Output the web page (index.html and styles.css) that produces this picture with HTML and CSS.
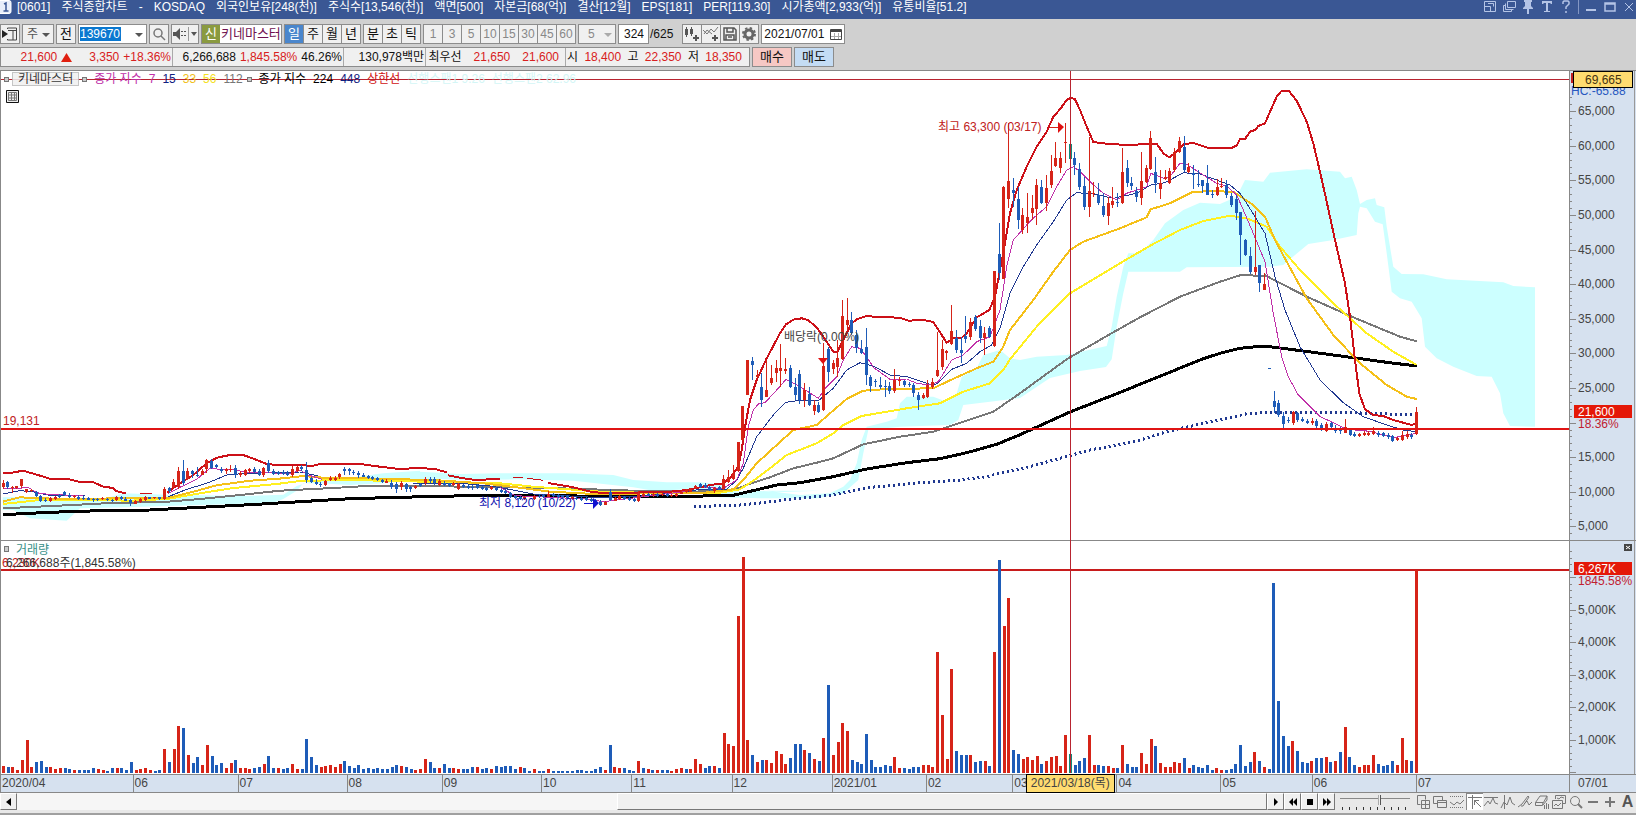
FILE: index.html
```html
<!DOCTYPE html>
<html lang="ko">
<head>
<meta charset="utf-8">
<title>[0601] 주식종합차트</title>
<link rel="stylesheet" href="styles.css">
</head>
<body>
<header class="titlebar">
  <svg class="app-mark" viewBox="0 0 14 14"><rect x="-2" y="0.5" width="13" height="13" rx="2" fill="#e8eefa" stroke="#fff"/><path d="M4 4l2-1v8M3.500 11h5" fill="none" stroke="#3a5794" stroke-width="1.500"/></svg>
  <h1 class="title"><span>[0601]</span><span>주식종합차트</span><span>-</span><span>KOSDAQ</span><span>외국인보유[248(천)]</span><span>주식수[13,546(천)]</span><span>액면[500]</span><span>자본금[68(억)]</span><span>결산[12월]</span><span>EPS[181]</span><span>PER[119.30]</span><span>시가총액[2,933(억)]</span><span>유통비율[51.2]</span></h1>
  <div class="window-tools">
    <button class="wbtn" aria-label="화면 배치"><svg viewBox="0 0 14 14"><path d="M1.500 1.500h11v10h-11zM1.500 6.500h6v5M5 3.500h5.500v3" /></svg></button>
    <button class="wbtn" aria-label="화면 복제"><svg viewBox="0 0 14 14"><path d="M5.500 1.500h8v6h-8zM3.500 5.500h-2v6h8v-2M3.500 3.500v6h8"/></svg></button>
    <button class="wbtn" aria-label="고정"><svg viewBox="0 0 14 14"><path class="solid" d="M3 0h8v2h-1v4l2 2v1H2V8l2-2V2H3zM6 9h2v5H6z"/></svg></button>
    <button class="wbtn" aria-label="글꼴"><svg viewBox="0 0 14 14"><path class="solid" d="M2 1h10v3h-1l-1-1H8v8h2v1H4v-1h2V3H4L3 4H2z"/></svg></button>
    <button class="wbtn" aria-label="도움말"><svg viewBox="0 0 14 14"><path d="M4 4V2l1-1h4l1 1v2L7 7v2M7 11v2" stroke-width="1.500"/></svg></button>
    <i class="wsep"></i>
    <button class="wbtn" aria-label="최소화"><svg viewBox="0 0 14 14"><path d="M2 10h10" stroke-width="2"/></svg></button>
    <button class="wbtn" aria-label="최대화"><svg viewBox="0 0 14 14"><path d="M2 3h10v8H2zM2 4h10" stroke-width="1.500"/></svg></button>
    <button class="wbtn" aria-label="닫기"><svg viewBox="0 0 14 14"><path d="M3 3l8 8M11 3l-8 8"/></svg></button>
  </div>
</header>

<section class="toolbar">
  <div class="row">
    <button class="btn w20" aria-label="패널"><svg width="16" height="16" viewBox="0 0 16 16" fill="none" stroke="#444"><path d="M5.500 3V2h9v12h-9v-1M6 4.500h9M11 5v9"/><path d="M0 4l6 4-6 4z" fill="#222" stroke="none"/></svg></button>
    <span class="combo w32"><select class="sel" aria-label="종목 구분"><option>주</option></select><svg class="arrow" viewBox="0 0 8 4"><path d="M0 0h8L4 4z"/></svg></span>
    <button class="btn w20">전</button>
    <span class="combo code"><input class="code-input" aria-label="종목코드" value="139670"><svg class="arrow" viewBox="0 0 8 4"><path d="M0 0h8L4 4z"/></svg></span>
    <button class="btn w20" aria-label="검색"><svg width="14" height="14" viewBox="0 0 14 14" fill="none" stroke="#777" stroke-width="1.500"><circle cx="6" cy="6" r="4"/><path d="M9 9l4 4"/></svg></button>
    <button class="btn w28" aria-label="소리"><svg width="24" height="14" viewBox="0 0 24 14"><path d="M0 5h3l4-4v12L3 9H0z" fill="#555"/><path d="M9 4v1M9 8v1M12 4v1M12 8v1" stroke="#555" stroke-width="2"/><path d="M15.500-4v22" stroke="#999"/><path d="M18 5h6l-3 4z" fill="#555"/></svg></button>
    <span class="name"><b class="badge">신</b><span class="stock">키네마스터</span></span>
    <div class="group"><button class="btn cell on">일</button><button class="btn cell">주</button><button class="btn cell">월</button><button class="btn cell">년</button></div>
    <div class="group"><button class="btn cell">분</button><button class="btn cell">초</button><button class="btn cell">틱</button></div>
    <div class="group off"><button class="btn cell">1</button><button class="btn cell">3</button><button class="btn cell">5</button><button class="btn cell">10</button><button class="btn cell">15</button><button class="btn cell">30</button><button class="btn cell">45</button><button class="btn cell">60</button></div>
    <span class="combo w38 off"><select class="sel center" aria-label="분 단위"><option>5</option></select><svg class="arrow" viewBox="0 0 8 4"><path d="M0 0h8L4 4z"/></svg></span>
    <span class="count"><input class="count-input" aria-label="조회 봉 수" value="324"><span>/625</span></span>
    <div class="group tools">
      <button class="btn cell" aria-label="봉 추가"><svg width="16" height="16" viewBox="0 0 16 16"><path d="M1 3h3v6H1zM6 3h3v5H6zM2 1h1v10H2zM7 1h1v9H7zM11 9h2v2h2v2h-2v2h-2v-2H9v-2h2z" fill="#555"/></svg></button>
      <button class="btn cell" aria-label="지표 추가"><svg width="16" height="16" viewBox="0 0 16 16"><path d="M0 4l4 4 4-5 3 3 4-5M1 8l3-4 5 4" fill="none" stroke="#777"/><path d="M11 9h2v2h2v2h-2v2h-2v-2H9v-2h2z" fill="#555"/></svg></button>
      <button class="btn cell" aria-label="저장"><svg width="16" height="16" viewBox="0 0 16 16" fill="none" stroke="#555" stroke-width="1.500"><path d="M2 2h10l2 2v10H2zM5 2v4h6V2M4 14V9h8v5M6 11h4"/></svg></button>
      <button class="btn cell" aria-label="설정"><svg width="16" height="16" viewBox="0 0 16 16" fill="none" stroke="#666"><circle cx="8" cy="8" r="4" stroke-width="3"/><circle cx="8" cy="8" r="6" stroke-width="2" stroke-dasharray="2.400 2.310"/></svg></button>
    </div>
    <span class="date"><input class="date-input" aria-label="기준일" value="2021/07/01"><svg width="12" height="12" viewBox="0 0 12 12"><path d="M.5 1.500h11v10H.5zM1 3h10" fill="none" stroke="#444"/><path d="M1 2h10v2H1z" fill="#444"/><path d="M1 8.500h10M4.500 5v6M8.500 5v6" stroke="#aaa"/></svg></span>
  </div>
  <div class="row quote-row">
    <div class="quotes">
      <div class="q q1"><span class="up">21,600</span><svg width="11" height="9" viewBox="0 0 11 9"><path d="M5.500 0L11 9H0z" fill="#e02010"/></svg><span class="up push">3,350</span><span class="up">+18.36%</span></div>
      <div class="q q2"><span>6,266,688</span><span class="up">1,845.58%</span><span>46.26%</span></div>
      <div class="q q3"><span>130,978백만</span></div>
      <div class="q q4"><span>최우선</span><span class="up">21,650</span><span class="up">21,600</span></div>
      <div class="q q5"><span>시</span><span class="up">18,400</span><span>고</span><span class="up">22,350</span><span>저</span><span class="up">18,350</span></div>
    </div>
    <button class="btn trade buy">매수</button>
    <button class="btn trade sell">매도</button>
  </div>
</section>

<main class="chart">
  <div class="plot">
    <svg id="plot" viewBox="1 71 1568 703" preserveAspectRatio="none"></svg>
    <div class="legend">
      <i class="sq"></i><span class="tag">키네마스터</span><i class="sq"></i>
      <span class="ma"><span class="c7">종가 지수</span><span class="c7">7</span><span class="c15">15</span><span class="c33">33</span><span class="c56">56</span><span class="c112">112</span></span>
      <i class="sq"></i>
      <span class="ma"><span class="c224">종가 지수</span><span class="c224">224</span><span class="c15">448</span><span class="cup">상한선</span><span class="cspan">선행스팬1 9.26</span><span class="cspan">선행스팬2 62.96</span></span>
    </div>
    <button class="grid-btn" aria-label="데이터 표"><svg width="13" height="13" viewBox="0 0 13 13"><path d="M.5.5h12v12H.5z" fill="#eee" stroke="#111"/><path d="M2.500 2.500h8v8h-8zM5.500 2v9M8.500 2v9M2 5h9M2 8h9" fill="none" stroke="#777"/></svg></button>
  </div>
  <svg class="axis" id="axis" viewBox="1569 71 67 703" preserveAspectRatio="none"></svg>
</main>

<div class="dates">
  <div class="months" id="months"></div>
  <div class="last-date">07/01</div>
  <div class="date-tip">2021/03/18(목)</div>
</div>

<footer class="bottom">
  <button class="sbtn" aria-label="왼쪽으로"><svg viewBox="0 0 10 10"><path d="M7 1v8L2 5z"/></svg></button>
  <div class="track"><div class="thumb"></div></div>
  <div class="player">
    <button class="sbtn" aria-label="재생"><svg viewBox="0 0 10 10"><path d="M3 1v8l4-4z"/></svg></button>
    <button class="sbtn" aria-label="뒤로"><svg viewBox="0 0 10 10"><path d="M5 1v8L1 5zM9 1v8L5 5z"/></svg></button>
    <button class="sbtn" aria-label="정지"><svg viewBox="0 0 10 10"><path d="M2 2h6v6H2z"/></svg></button>
    <button class="sbtn" aria-label="앞으로"><svg viewBox="0 0 10 10"><path d="M1 1v8l4-4zM5 1v8l4-4z"/></svg></button>
  </div>
  <div class="speed"><input type="range" class="slider" aria-label="속도" value="56"></div>
  <div class="draw">
    <button class="dbtn" aria-label="창 추가"><svg viewBox="0 0 16 16"><path d="M10.500 5.500v-4h-8v9h3M6.500 6.500h8v8h-8zM10.500 7v7M7 10.500h7"/></svg></button>
    <button class="dbtn" aria-label="창 겹치기"><svg viewBox="0 0 16 16"><path d="M5.500 9.500h-4v-7h9v4M5.500 6.500h9v7h-9zM6 8.500h8"/></svg></button>
    <button class="dbtn" aria-label="지표 영역"><svg viewBox="0 0 16 16"><path d="M1 2.500h14M1 13.500h14" stroke-dasharray="1 1"/><path d="M1 8l4 3 3-3 3 2 4-4"/></svg></button>
    <button class="dbtn pressed" aria-label="십자선"><svg viewBox="0 0 16 16"><path d="M1 3.500h14M5.500 1v14M7 6l7 7M7.500 11V6.500H12"/></svg></button>
    <button class="dbtn" aria-label="추세선"><svg viewBox="0 0 16 16"><path d="M1 3.500h14M1 12l4-5 2 3 3-6 2 5 3 1"/></svg></button>
    <button class="dbtn" aria-label="수직선"><svg viewBox="0 0 16 16"><path d="M4.500 1v14M1 14l3-6 3 3 3-8 2 6 3 2"/></svg></button>
    <button class="dbtn" aria-label="펜"><svg viewBox="0 0 16 16"><path d="M1 13l4-3L11 2l1 1-6 9-2 0M7 10l3-3 2 4 3-3"/></svg></button>
    <button class="dbtn" aria-label="지우개"><svg viewBox="0 0 16 16"><path d="M1.500 8.500L6 2h7L9.500 8.500zM1.500 8.500v3h7l.5-3M9 11l4-5V2M10.500 11v4M12.500 9v6M14.500 10v5"/></svg></button>
    <button class="dbtn" aria-label="이미지"><svg viewBox="0 0 16 16"><path d="M4.500 5V1.500h10v8H12M1.500 6.500h10v8h-10zM3 12l2-2 2 2 3-3M6 4l2 1 2-2 3 1"/></svg></button>
    <button class="dbtn" aria-label="돋보기"><svg viewBox="0 0 16 16"><circle cx="7" cy="7" r="4.500"/><path d="M10 10l4 4" stroke-width="2"/></svg></button>
    <button class="dbtn" aria-label="축소"><svg viewBox="0 0 16 16"><path d="M3 8h10" stroke-width="2"/></svg></button>
    <button class="dbtn" aria-label="확대"><svg viewBox="0 0 16 16"><path d="M3 8h10M8 3v10" stroke-width="2"/></svg></button>
    <button class="dbtn letter">A</button>
  </div>
</footer>
<script src="app.js"></script>
</body>
</html>
```
FILE: styles.css
```css
* { box-sizing: border-box; }
html, body { height: 100%; }
body {
  margin: 0;
  display: flex;
  flex-direction: column;
  background: #d0d0d0;
  color: #111;
  font-family: "Liberation Sans", "Noto Sans CJK KR", sans-serif;
  font-size: 12px;
  line-height: 16px;
  overflow: hidden;
  white-space: nowrap;
}
button, input, select { font: inherit; color: inherit; margin: 0; padding: 0; border-radius: 0; }
svg { display: block; }

/* title bar */
.titlebar { flex: none; height: 19px; background: #3a5794; color: #fff; display: flex; align-items: flex-start; overflow: hidden; }
.app-mark { width: 14px; height: 14px; flex: none; }
.title { margin: 0 0 0 3px; font-size: 12px; line-height: 14px; font-weight: 400; display: flex; gap: 11px; flex: 1; }
.window-tools { display: flex; align-items: center; gap: 5px; height: 14px; }
.wbtn { border: 0; background: none; width: 14px; height: 14px; }
.wbtn svg { width: 14px; height: 14px; fill: none; stroke: #b4c4e6; }
.wbtn .solid { fill: #b4c4e6; stroke: none; }
.wsep { width: 1px; height: 14px; background: #8497c4; }

/* toolbar */
.toolbar { flex: none; height: 52px; padding-top: 5px; display: flex; flex-direction: column; gap: 3px; border-bottom: 1px solid #888; }
.row { display: flex; height: 20px; gap: 2px; }
.btn, .combo, .name, .count-input, .date { border: 1px solid #8c8c8c; background: #f0f0f0; height: 20px; }
.btn { display: flex; align-items: center; justify-content: center; flex: none; font-size: 13px; }
.w20 { width: 20px; }
.w28 { width: 28px; }
.w32 { width: 32px; }
.w38 { width: 38px; }
.combo { display: flex; align-items: center; flex: none; position: relative; }
.sel { appearance: none; border: 0; background: none; width: 100%; padding-left: 4px; height: 18px; color: #555; }
.sel.center { padding-left: 9px; color: #888; }
.arrow { position: absolute; right: 3px; top: 8px; width: 8px; height: 4px; fill: #555; pointer-events: none; }
.code { width: 69px; background: #fff; }
.code-input { border: 0; width: 41px; height: 14px; margin-left: 1px; background: #0a78d0; color: #fff; }
.name { display: flex; width: 81px; background: #fff; color: #701050; }
.badge { width: 18px; background: #8a9a40; color: #fff; font-weight: 400; font-size: 13px; line-height: 17px; text-align: center; }
.stock { font-size: 13px; padding-left: 1px; line-height: 17px; }
.group { display: flex; }
.cell { width: 20px; margin-right: -1px; }
.group .cell:last-child { margin-right: 0; }
.on { background: #4a86cc; color: #fff; }
.off { color: #888; }
.off .cell { font-size: 12px; }
.off .arrow { fill: #aaa; }
.count { display: flex; align-items: center; gap: 1px; margin-right: 7px; }
.count-input { width: 31px; background: #fff; text-align: right; padding-right: 4px; }
.date { display: flex; align-items: center; width: 84px; background: #fff; gap: 2px; padding-left: 2px; }
.date-input { width: 64px; border: 0; background: none; height: 16px; }
.quotes { display: flex; width: 750px; border: 1px solid #8c8c8c; background: #f0f0f0; }
.q { display: flex; align-items: center; border-right: 1px solid #aaa; justify-content: flex-end; gap: 4px; padding-right: 1px; flex: none; }
.q1 { width: 172px; }
.q2 { width: 171px; }
.q3 { width: 82px; }
.q4 { width: 140px; gap: 12px; padding-right: 6px; }
.q5 { flex: 1; border-right: 0; justify-content: space-between; padding: 0 7px 0 1px; }
.push { margin-left: 13px; }
.up { color: #d82020; }
.trade { width: 40px; }
.buy { background: #f6c8c4; }
.sell { background: #c4dcf4; }

/* chart */
.chart { flex: 1; min-height: 0; display: flex; background: #fff; }
.plot { flex: 1; min-width: 0; position: relative; border-left: 1px solid #888; }
.plot > svg, .axis { width: 100%; height: 100%; }
.plot polyline { shape-rendering: crispEdges; }
.axis { width: 67px; flex: none; background: #d6e1ef; }
.chart text { font-size: 12px; fill: #444; }
.legend { position: absolute; left: 3px; top: 0; display: flex; align-items: center; gap: 3px; height: 16px; }
.sq { width: 5px; height: 5px; border: 1px solid #777; background: #ccc; }
.tag { border: 1px solid #bbb; background: #f0f0f0; opacity: .85; line-height: 12px; padding: 0 5px; }
.ma { display: flex; gap: 7px; margin: 0 1px 0 4px; }
.c7 { color: #c030a8; }
.c15 { color: #102080; }
.c33 { color: #f0c020; }
.c56 { color: #f4e020; }
.c112 { color: #777; }
.c224 { color: #000; }
.cup { color: #d01010; }
.cspan { color: #d4f6f6; }
.grid-btn { position: absolute; left: 5px; top: 19px; border: 0; background: none; }

/* date axis */
.dates { flex: none; height: 19px; display: flex; position: relative; background: #d6e1ef; border: 1px solid #888; border-width: 1px 0; color: #444; }
.months { display: flex; flex: 1; }
.month { flex: 1 1 0; border-left: 1px solid #888; padding-left: 1px; overflow: hidden; }
.last-date { width: 67px; padding-left: 8px; border-left: 1px solid #888; }
.date-tip { position: absolute; left: 62.700%; top: -1px; height: 19px; width: 89px; text-align: center; border: 1px solid #000; background: #ffdc70; line-height: 16px; }

/* scroll and drawing bar */
.bottom { flex: none; height: 22px; padding-bottom: 3px; display: flex; background: #e8e8e8; border-bottom: 2px solid #a0a0a0; }
.sbtn { width: 17px; height: 17px; background: #f0f0f0; border: 1px solid #fff; border-right-color: #777; border-bottom-color: #777; display: flex; align-items: center; justify-content: center; }
.sbtn svg { width: 10px; height: 10px; }
.track { flex: 1; background: #f6f6f6; display: flex; justify-content: flex-end; }
.thumb { width: 52%; background: #f0f0f0; border: 1px solid #fff; border-right-color: #777; border-bottom-color: #777; }
.player { display: flex; }
.speed { width: 80px; padding: 0 5px; }
.slider { appearance: none; width: 70px; height: 17px; display: block; background: linear-gradient(#888, #888) 0 5px / 100% 1px no-repeat, repeating-linear-gradient(90deg, #333 0 1px, transparent 1px 7px) 2px 14px / 100% 3px no-repeat; }
.slider::-webkit-slider-thumb { appearance: none; width: 3px; height: 10px; margin-top: -3px; background: #eee; border-right: 1px solid #555; border-left: 1px solid #aaa; }
.draw { display: flex; }
.dbtn { width: 17px; height: 17px; border: 0; background: none; color: #555; }
.dbtn svg { width: 16px; height: 16px; fill: none; stroke: #777; }
.pressed { background: #fff; border-left: 1px solid #888; border-top: 1px solid #888; }
.letter { font: 700 16px/17px "Liberation Sans", sans-serif; }
```
FILE: app.js
```js
const NS = 'http://www.w3.org/2000/svg';
const RED = '#d62418', BLUE = '#1e5cb8', TEAL = '#108878';
const plot = document.getElementById('plot');
const axis = document.getElementById('axis');

function add(parent, tag, attrs, text) {
  const node = document.createElementNS(NS, tag);
  for (const key in attrs) node.setAttribute(key, attrs[key]);
  if (text) node.textContent = text;
  parent.appendChild(node);
  return node;
}
// Series are stored per section, in thirds of a unit from the section's origin.
const O = { a: [0, 400], b: [400, 400], c: [700, 280], d: [920, 80], e: [1220, 80], p: [0, 0] };
function points(parts) {
  return parts.map(([id, list]) => list.trim().split(/\s+/).map(p => {
    const [x, y] = p.split(',').map(Number);
    const k = id === 'p' ? 1 : 3;
    return (O[id][0] + x / k).toFixed(1) + ',' + (O[id][1] + y / k).toFixed(1);
  }).join(' ')).join(' ');
}
function line(color, width, parts, dash) {
  const attrs = { points: points(parts), fill: 'none', stroke: color, 'stroke-width': width, 'stroke-linejoin': 'round' };
  if (dash) attrs['stroke-dasharray'] = dash;
  add(plot, 'polyline', attrs);
}
function rect(parent, x, y, w, h, fill) { add(parent, 'rect', { x, y, width: w, height: h, fill }); }

// leading span cloud
for (const parts of [
  [['a', '8,292 110,290 300,300 370,280 500,284 740,288 850,284 890,258 930,245 1000,240 1150,220 1260,212'],
   ['b', '60,215 180,222 300,220 500,220 640,225 700,240 800,247 900,247 960,252 1010,275 1060,272 1150,276 1260,272'],
   ['c', '200,632 300,645 390,640 430,620 450,600 470,550 485,480 500,440 560,425 590,415 600,370 620,350 700,350 740,365 770,340 785,290 830,265 850,225 900,210 930,235 960,240'],
   ['d', '350,830 440,825 560,798 575,740 590,650 610,560 625,520 660,520 700,480 735,430 790,390 840,368 900,372 950,350 975,300 1030,305 1050,278 1160,268'],
   ['e', '360,275 375,295 395,290 410,330 420,372 440,360 465,355 470,375 493,382 500,440 520,560 545,582 610,583 680,598 850,607 880,618 945,622 945,1040 870,1038 850,1000 840,940 815,890 770,888 700,860 650,835 615,800 605,715 575,665 540,655 515,635 500,520 488,433 465,425 440,385 420,380 415,400 410,465 340,480 265,492 225,525 190,555'],
   ['d', '1050,560 800,562 780,575 625,575 610,640 590,740 575,838'],
   ['p', '1106,367 1080,371 1050,378 1020,398'],
   ['c', '870,365 790,375 775,420 750,435 600,440 505,450 490,520 475,600 430,640 350,655 180,655 60,652'],
   ['b', '900,280 870,268 760,272 700,262 520,242 350,238 200,240 100,236'],
   ['a', '1150,250 1050,255 960,250 910,250 890,272 850,297 820,308 700,312 500,318 380,322 240,325 200,362 90,355 40,330 8,330']]
]) add(plot, 'polygon', { points: points(parts), fill: '#ccffff' });

// moving averages
line('#000', 3, [['a', '8,344 150,337 300,332 450,330 600,322 750,314 900,305 1050,296 1200,292'], ['b', '0,292 200,287 500,287 600,290 800,291 900,289 930,286 1000,286 1080,267 1130,255'], ['c', '300,608 400,590 500,567 620,548 720,536 800,518 890,493 960,464'], ['p', '1070,412 1116,394 1158,377'], ['d', '845,838 900,820 960,805 1030,798'], ['e', '140,799 250,813 400,833 500,847 590,858']]);
line('#777', 2, [['a', '8,325 200,316 350,308 480,307 600,297 720,285 840,272 1000,264 1100,258'], ['b', '0,257 200,260 450,264 700,272 880,275 1000,270 1060,248 1110,232 1180,205'], ['c', '350,548 400,535 490,493 600,470 700,455 790,425 880,395 960,340'], ['d', '440,838 560,768 660,712 780,650 900,605 960,586 1035,587'], ['e', '135,586 260,650 400,712 540,770 590,784']]);
line('#fff020', 2, [['a', '8,312 120,300 250,299 390,302 500,297 600,280 700,264 830,252 900,243 1030,240'], ['b', '0,243 100,246 300,250 400,260 600,275 800,280 960,278 1020,268 1060,242 1110,205'], ['c', '260,525 350,490 400,460 430,435 485,408 620,385 720,370 790,335 870,310 910,270'], ['d', '270,838 350,740 450,640 550,580 620,538 700,492 780,450 850,423 930,407 980,415 1040,440'], ['e', '180,500 240,570 340,670 440,760 520,815 590,855']]);
line('#f5c018', 2, [['a', '8,305 60,292 120,295 250,298 390,293 500,295 580,275 650,256 750,242 850,235 910,228 980,234 1160,236'], ['b', '0,238 100,240 250,250 350,262 450,275 600,283 750,280 900,280 1000,268 1030,240 1070,190 1130,135'], ['c', '280,450 350,435 390,400 440,357 490,332 560,327 700,325 765,294 830,265 880,245 910,200 930,150'], ['d', '270,750 340,660 400,575 450,510 490,485 600,445 680,412 692,388 750,370 820,335 880,334 940,335 1000,375'], ['e', '135,410 165,480 200,545 260,655 340,765 420,850 500,915 560,950 590,957']]);
line('#203890', 3, [['b', '883,319 1000,317 1090,308'], ['c', '250,660 400,645 500,623 650,609 780,600 860,590 900,580 960,568'], ['p', '1090,450 1137,441 1169,431 1210,422'], ['e', '0,1020 80,1001 140,997 400,998 580,1005']], '2 3');
line('#203890', 1, [['a', '8,282 60,272 100,275 140,285 255,287']]);
line('#203890', 1, [['a', '505,290 560,268 620,250 680,225 740,220 900,216 955,228']]);
line('#203890', 1, [['b', '40,250 180,250 270,258 340,270 400,282 580,292 700,290 860,275 900,268 980,268 1010,240 1030,205'], ['c', '170,470 220,405 258,367 300,361 355,362 400,325 440,270 480,248 520,258 570,285 620,290 690,313 710,312 755,268 800,250 840,215'], ['d', '180,815 215,795 240,745 270,640 310,560 350,495 400,425 440,360 470,338 520,342 580,355 650,340 692,315 735,308 790,278 840,282 890,300 930,315 960,340'], ['e', '80,370 135,460 165,590 195,690 240,800 300,900 370,968 430,1010 500,1035 550,1050 590,1055']]);
line('#c030a8', 1, [['a', '8,267 60,265 85,262 100,272 120,281 250,288']]);
line('#c030a8', 1, [['a', '505,280 540,262 590,238 630,205 660,208 700,208 740,218 800,218 870,222 900,210 925,225 965,238']]);
line('#c030a8', 1, [['b', '300,262 345,287 560,297 610,305 860,274 900,262 970,265 1010,240 1030,190'], ['c', '145,440 160,390 175,372 195,368 230,330 258,298 300,320 355,355 380,320 410,290 430,240 455,200 480,205 500,230 520,262 570,298 620,297 650,310 690,315 715,305 755,240 790,225 830,185'], ['d', '210,770 240,690 260,560 280,480 320,435 345,410 380,380 410,320 440,270 460,260 480,275 510,305 550,340 590,360 620,340 650,330 680,320 692,280 735,296 750,290 780,250 800,253 850,285 890,310 920,318 950,345 970,390 1000,460'], ['e', '135,545 160,700 185,830 205,890 235,945 300,1010 345,1030 380,1048 450,1054 520,1073 590,1060']]);
const UP = '#cc1018';
line(UP, 2, [['a', '8,219 35,218 70,212 110,224 150,236 205,237 240,246 280,247 310,260 340,264 350,274 378,280']]);
line(UP, 1, [['a', '420,281 455,281']]);
line(UP, 2, [['a', '500,278 540,250 580,225 620,190 650,173 690,165 730,165 765,178 800,192 830,195 900,196 940,197 965,191 1080,192 1130,199 1190,206'], ['b', '0,207 55,204 105,207 140,217']]);
line(UP, 2, [['b', '145,226 180,233 220,239 300,238']]);
line(UP, 1, [['b', '340,232 370,233']]);
line(UP, 1, [['b', '380,235 430,241']]);
line(UP, 2, [['b', '445,249 520,262 580,277 650,280 730,277 800,276 860,270 900,262 935,254 965,252 990,235'], ['c', '115,560 125,510 137,430 150,360 170,300 200,235 240,160 258,133 280,119 305,115 325,121 350,142 375,178 400,215 412,216 430,180 455,130 470,118 500,108 530,111 600,113 625,122 670,120'], ['d', '40,726 80,788 100,775 125,773 140,760 170,712 208,690 225,650 240,570 255,490 270,400 290,330 320,260 350,200 380,155 400,110 420,88 440,60 452,53 465,58 480,90 500,140 520,186 560,191 620,195 710,191 730,220 748,232 770,215 790,193 820,189 865,204 935,204 950,196 960,178 975,177 990,155 1005,150 1015,138 1035,130 1050,95 1070,50'], ['e', '185,32 207,33 230,62 260,125 280,190 300,275 320,365 345,480 375,610 390,710 405,840 418,940 435,988 460,1005 490,1008 520,1020 550,1028 575,1035 590,1030']]);

// candles: x, high, top, bottom, low, direction
const candles = {
  a: `10,240,248,262,268,r 22,242,247,262,268,b 37,257,260,264,278,r 50,257,259,264,266,r 65,237,238,258,264,r 80,266,268,276,280,r 95,267,270,274,276,r 108,272,276,288,290,b 122,285,288,302,306,b 136,295,299,303,306,b 150,290,293,303,306,r 165,288,291,296,299,r 178,283,286,292,295,b 193,273,277,284,288,b 207,280,284,290,293,b 222,285,288,292,294,r 236,286,290,296,300,b 250,288,293,297,300,b 264,290,294,299,301,b 279,294,296,301,305,b 293,294,297,301,304,b 307,290,294,298,300,r 322,294,297,301,304,b 336,296,299,303,306,b 349,288,292,300,303,r 363,287,290,296,299,b 377,292,296,302,304,b 392,296,300,310,318,b 405,299,303,311,313,r 420,293,297,306,308,r 435,288,291,299,302,r 449,290,292,296,298,b 463,290,292,295,297,r 478,291,292,297,299,b
    493,262,266,298,300,r 508,260,264,274,278,b 521,238,246,262,265,r 535,202,212,262,266,r 549,180,212,248,254,b 562,205,212,236,240,r 577,210,214,222,234,b 592,200,224,228,232,b 606,208,212,224,226,r 620,176,180,208,220,r 634,178,182,204,206,b 649,192,195,201,204,b 664,200,206,214,220,b 678,203,208,214,222,r 691,194,206,210,216,r 706,194,204,226,234,b 720,212,218,226,230,r 735,206,210,224,228,r 748,204,208,214,218,r 763,200,206,216,220,b 777,206,212,226,229,b 790,200,204,226,230,r 804,180,188,214,218,b 820,208,214,222,224,b 835,212,216,222,224,b 849,210,216,222,224,b 863,212,218,224,228,b 877,197,208,226,230,r 892,198,201,214,216,r 905,196,202,208,214,b 919,186,210,240,250,b 934,230,234,246,250,b 948,238,247,253,254,b 961,246,251,256,260,b 976,240,242,256,258,r 990,228,234,240,242,r 1005,228,234,240,242,r 1018,220,222,232,236,r 1033,200,207,214,226,b 1048,203,208,214,224,b 1061,210,215,220,226,b 1076,212,218,226,234,b 1090,220,224,230,232,b 1104,225,228,235,237,b 1118,229,232,238,240,b 1132,230,234,240,242,b 1146,238,241,247,249,b 1160,238,243,248,250,r 1175,240,248,262,266,b 1190,246,252,266,278,b 1205,242,250,262,270,r`,
  b: `20,250,252,268,276,b 32,258,262,268,276,b 46,254,257,264,266,r 62,248,251,258,260,b 76,230,236,250,254,r 90,230,237,243,250,b 104,232,238,250,254,b 118,236,242,254,258,r 134,244,248,255,258,b 148,248,250,257,260,b 160,247,250,256,258,r 175,250,253,268,270,r 190,252,256,261,264,b 204,254,258,263,266,b 217,256,260,265,270,b 232,252,256,263,266,b 246,258,262,267,270,b 260,260,263,269,272,b 275,259,262,267,270,r 290,260,263,270,273,b 303,266,269,275,278,b 316,268,272,280,283,b 330,275,279,290,293,b 345,286,289,295,297,b 360,288,290,296,299,b 374,288,292,298,301,r 403,284,288,298,300,r 417,283,287,292,295,b 431,282,286,291,294,b 445,274,283,290,292,r 460,280,283,289,291,b 474,282,285,290,293,b 488,284,286,292,295,b 502,285,288,294,297,b 516,287,291,297,299,r 530,290,293,298,300,b 545,291,294,300,303,b 559,290,295,300,303,b 573,295,298,303,305,b 587,298,301,306,309,b 601,301,305,316,318,b 616,304,307,314,316,r 631,268,275,300,302,b 645,291,294,302,304,r 658,285,289,296,299,r 672,287,290,296,299,b 687,291,294,300,304,b 702,294,296,302,306,b 716,274,280,304,306,r 731,279,282,288,290,r 745,278,281,287,289,b 759,278,281,286,290,r 773,280,282,288,290,b 787,278,281,286,289,r 801,280,283,288,290,b 815,281,284,289,291,r 830,279,281,287,290,r 844,272,275,281,283,r 858,268,271,277,280,r 872,264,268,275,277,r 886,254,258,264,266,r 901,248,253,262,265,b 915,250,256,262,265,b 929,258,261,270,273,b 943,260,265,272,278,r 958,258,262,269,271,b 970,225,238,268,270,r 985,210,232,246,248,r 1000,195,220,236,240,r 1015,126,126,212,215,r 1027,18,18,120,122,r`,
  c: `142,240,240,346,346,r 157,230,244,254,300,b 172,270,286,290,292,r 184,280,320,360,380,b 199,240,330,350,352,r 214,255,294,308,315,r 229,240,264,278,305,r 241,192,264,274,320,r 256,234,268,274,282,r 271,255,264,320,325,b 286,295,320,346,360,b 298,270,282,360,372,b 313,310,330,360,382,r 328,320,342,374,378,b 343,360,374,394,406,r 355,365,375,396,400,b 370,190,258,390,392,r 385,200,208,275,305,b 400,240,250,266,282,r 412,180,234,260,290,r 427,60,108,236,240,r 442,55,120,136,150,r 454,95,120,160,165,b 469,150,165,205,218,b 484,180,206,218,222,b 499,145,202,284,315,b 511,285,290,318,335,b 526,298,304,306,320,b 541,290,316,320,326,b 556,300,318,320,352,b 568,306,318,332,342,b 583,266,300,334,338,r 598,290,300,304,318,r 613,300,304,316,320,b 628,305,312,314,320,b 640,310,314,340,350,b 655,335,346,360,390,b 670,340,345,355,356,r 682,300,314,350,355,r 697,295,305,322,328,r 712,155,270,288,292,r 727,180,206,262,270,r 739,210,212,218,240,r 754,75,152,192,196,r 769,150,175,210,218,b 784,170,210,220,248,b 796,108,168,176,190,b 811,115,125,170,180,r 826,105,112,148,152,b 841,120,138,175,190,b 853,140,158,174,224,r 868,138,145,172,175,b`,
  d: `223,574,574,798,802,r 238,430,522,580,600,b 250,318,320,596,598,r 265,130,304,356,385,r 280,294,330,340,380,b 295,320,356,420,448,b 307,385,404,450,462,r 322,340,410,430,458,r 337,345,385,400,420,r 350,298,316,386,434,r 364,300,322,368,372,b 379,285,324,368,392,r 394,225,274,315,325,r 406,185,234,258,262,r 421,215,234,264,278,r 436,130,186,188,250,r 451,140,192,236,260,t 463,215,234,255,285,b 478,250,268,320,330,b 493,290,318,380,390,b 508,170,334,380,412,r 521,306,338,342,350,r 536,310,346,370,375,b 550,340,378,406,412,b 565,350,370,408,436,r 577,322,362,376,385,r 592,340,366,370,380,b 607,205,276,370,372,r 622,240,264,310,320,b 634,290,310,318,330,b 649,320,332,350,365,b 664,215,304,354,374,r 679,255,264,306,310,r 692,154,175,266,270,r 706,230,276,310,340,b 721,270,308,326,356,r 736,270,290,296,300,r 748,265,274,308,312,r 763,205,216,270,275,r 779,170,184,215,220,r 793,168,200,270,275,b 805,250,262,276,280,r 820,255,278,284,328,b 835,270,312,314,322,b 848,300,300,318,340,b 863,256,310,344,346,b 878,330,343,346,354,b 892,296,320,346,348,r 905,294,318,322,325,r 919,300,314,346,354,b 935,340,348,376,380,b 948,345,356,398,420,b 961,396,396,466,554,b 976,478,480,526,528,b 991,500,528,576,582,b 1006,394,560,576,585,r 1018,556,556,610,636,b 1033,580,612,630,630,r`,
  e: `148,863,863,866,866,b 163,934,962,980,1000,b 175,960,970,1005,1010,b 190,995,1008,1032,1045,b 205,1010,1020,1024,1030,b 220,994,996,1030,1035,r 232,995,1000,1020,1025,b 247,1010,1018,1022,1025,b 262,1018,1022,1028,1032,b 277,1015,1024,1030,1034,r 290,1018,1022,1038,1045,b 304,1030,1036,1046,1052,b 319,1025,1032,1052,1056,r 334,1026,1030,1042,1048,b 347,1035,1044,1052,1058,b 361,1040,1048,1054,1062,b 376,1018,1040,1058,1060,r 390,1043,1050,1064,1068,b 404,1056,1062,1067,1070,b 418,1060,1063,1067,1070,r 433,1054,1060,1066,1068,r 446,1054,1060,1065,1068,r 460,1040,1052,1062,1066,r 475,1054,1058,1066,1070,b 490,1056,1060,1068,1071,b 504,1060,1064,1071,1076,b 518,1064,1068,1082,1085,b 532,1070,1074,1080,1083,r 547,1054,1066,1080,1084,r 561,1054,1062,1070,1076,r 575,1058,1064,1071,1076,b 590,980,996,1062,1064,r`
};
const tone = { r: RED, b: BLUE, t: TEAL };
for (const id in candles) for (const item of candles[id].trim().split(/\s+/)) {
  const [x, hi, top, bot, lo, dir] = item.split(',');
  const cx = Math.round(O[id][0] + x / 3 - 0.5), base = O[id][1];
  const y = v => Math.round(base + v / 3);
  rect(plot, cx, y(hi), 1, Math.max(1, y(lo) - y(hi)), tone[dir]);
  rect(plot, cx - 1, y(top), 3, Math.max(1, y(bot) - y(top)), tone[dir]);
}

// volume: first x, last x, then height with direction
const volume = [
  [3, 695, '7r 6b 6r 3r 13r 33r 6r 11b 12b 6b 6r 4r 5r 5b 4b 3r 3b 3b 3b 5b 4r 3r 2b 5b 5r 5b 3b 11b 3r 4r 5r 3r 2b 3b 24r 11b 24r 47r 45b 18r 10b 16b 8r 28r 17b 8b 10b 5r 10r 13b 5r 5r 4r 5b 6b 9r 17b 5b 5r 4b 5b 9r 4r 4b 34b 16b 8b 6r 7r 8r 6r 9r 12b 7b 5b 8b 4b 5b 4b 5b 4b 4b 6b 8b 7r 6b 4b 3r 4r 14r 11b 5b 5r 9b 5b 5r 4r 4b 4b 6b 6r 4b 5b 4r 7b 6b 7b 7b 4b 6r 5b 2b 4r 2b 2b 4r 2b 2b 2b 2b 2b 3b 3b 2b 2b 4b 6b 3r 28b 6r 5r 5b 3b 2b 12r 5b 4r 3b 3r 3b 3b 2r 4r 5r 4b 4r 14r'],
  [700, 1198, '9r 5b 7b 7r 5b 40r 29r 27r 157r 216r 33r 18b 11r 13b 13r 10r 22r 19r 9r 15b 29b 29b 23r 20b 14r 12b 35r 88b 18r 31r 50r 42r 13b 11b 9b 39b 13b 6b 6b 8b 7b 16r 5r 5b 4b 6b 6b 8r 8r 6r 121r 58r 14r 104r 22b 18b 18b 18r 11b 12b 12r 7b 121r 213b 147r 175r 23b 19b 14r 16r 13r 17r 9b 12r 16r 17r 7r 38r 19t 8b 12b 15b 38r 8r 8b 7b 7r 5r 5b 28r 9b 6b 6b 20r 9r 34r 27b 10r 6r 6r 11r 10r 15b 5r 8b 6b'],
  [1202, 1416, '5b 8b 3b 5r 3r 3b 4b 9b 28b 7b 11b 21r 12b 6r 4b 190b 72b 37b 27b 32r 22b 11b 10b 12r 15b 15b 16r 11b 12r 21b 46r 16b 8b 6r 8r 8r 18r 9b 7b 8b 12b 8r 35r 13r 12b 203r']
];
rect(plot, 0, 569, 1569, 2, '#c81c1c');
for (const [from, to, list] of volume) {
  const bars = list.split(' ');
  bars.forEach((bar, i) => {
    const h = parseInt(bar, 10);
    const x = Math.round(from + (to - from) * i / (bars.length - 1)) - 1;
    rect(plot, x, 773 - h, 3, h, tone[bar.slice(-1)]);
  });
}

// guides and notes
rect(plot, 0, 79, 1569, 1, '#b82430');
rect(plot, 0, 428, 1569, 2, '#e01414');
rect(plot, 0, 540, 1569, 1, '#888');
rect(plot, 1070, 71, 1, 702, '#b82430');
const note = (x, y, color, text) => add(plot, 'text', { x, y, style: 'fill:' + color }, text);
note(3, 425, '#c02020', '19,131');
note(938, 131, '#c02020', '최고 63,300 (03/17)');
note(479, 507, '#1010b0', '최저 8,120 (10/22)');
note(784, 341, '#444', '배당락(0.00%)');
note(16, 554, '#389088', '거래량');
note(2, 567, '#c02020', '6,230K');
note(6, 567, '#333', '6,266,688주(1,845.58%)');
add(plot, 'path', { d: 'M1050 127.500h8', stroke: RED });
add(plot, 'path', { d: 'M1058 122l6 5-6 6z', fill: '#e01010' });
add(plot, 'path', { d: 'M584 503.500h10', stroke: '#1010d0' });
add(plot, 'path', { d: 'M593 498l6 5-6 6z', fill: '#1010d0' });
add(plot, 'path', { d: 'M818 358h10l-5 6z', fill: '#e01010' });
add(plot, 'rect', { x: 4.5, y: 546.5, width: 4, height: 5, fill: '#ccc', stroke: '#777' });

// value axis
rect(axis, 1569, 71, 1, 703, '#888');
rect(axis, 1634, 71, 1, 703, '#999');
rect(axis, 1569, 540, 67, 1, '#888');
const label = (y, text, color, x) => add(axis, 'text', { x: x || 1578, y, style: 'fill:' + (color || '#444') }, text);
for (let v = 4; v <= 67; v++) {
  const y = Math.round(561 - v * 6.92);
  rect(axis, 1570, y, v % 5 ? 2 : 6, 1, '#888');
  if (v % 5 === 0 && v !== 20) label(y + 4, v + ',000');
}
for (let v = 0; v <= 34; v++) {
  const y = Math.round(772 - v * 6.5);
  rect(axis, 1570, y, v % 5 ? 2 : 6, 1, '#888');
  if (v % 5 === 0 && v && v < 30) label(y + 4, v / 5 + ',000K');
}
label(95, 'HC:-65.88', '#2858c0', 1571);
rect(axis, 1571, 73, 2, 10, '#c02020');
add(axis, 'rect', { x: 1573.5, y: 71.5, width: 59, height: 16, fill: '#ffdc70', stroke: '#000' });
label(84, '69,665', '#443311', 1585);
rect(axis, 1574, 405, 58, 13, '#e41808');
label(416, '21,600', '#fff');
label(428, '18.36%', '#c02030');
rect(axis, 1574, 562, 58, 13, '#e41808');
label(573, '6,267K', '#fff');
label(585, '1845.58%', '#c02030');
rect(axis, 1624, 544, 8, 7, '#444');
add(axis, 'path', { d: 'M1626 546l4 3M1630 546l-4 3', stroke: '#fff' });

// months, sized by their share of the time range
const months = document.getElementById('months');
for (const [text, span] of [['2020/04', 133], ['06', 105], ['07', 109], ['08', 95], ['09', 99], ['10', 90], ['11', 100], ['12', 100], ['2021/01', 94], ['02', 86], ['03', 104], ['04', 104], ['05', 91], ['06', 104], ['07', 154]]) {
  const cell = document.createElement('div');
  cell.className = 'month';
  cell.style.flexGrow = span;
  cell.textContent = text;
  months.appendChild(cell);
}
```
